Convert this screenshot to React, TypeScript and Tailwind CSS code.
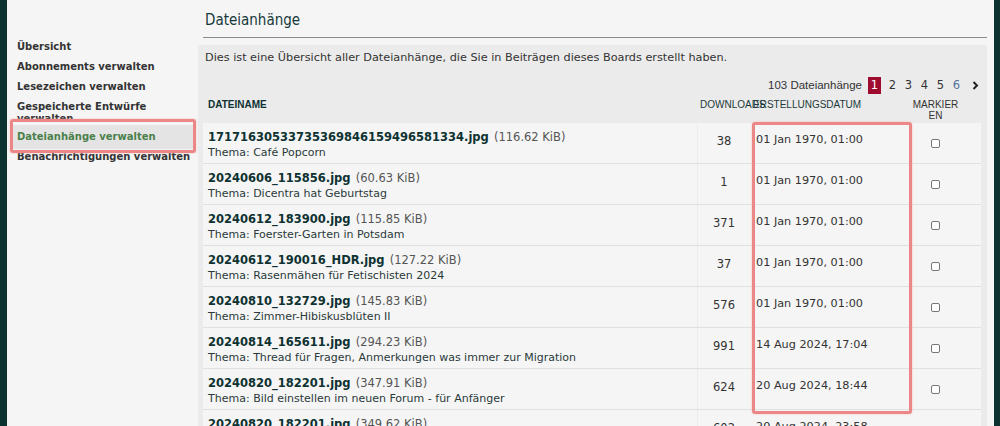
import React from 'react'

const sidebarItems = [
  'Übersicht',
  'Abonnements verwalten',
  'Lesezeichen verwalten',
  'Gespeicherte Entwürfe verwalten',
]

const rows = [
  { file: '17171630533735369846159496581334.jpg', size: '116.62 KiB', topic: 'Café Popcorn', dl: '38', date: '01 Jan 1970, 01:00' },
  { file: '20240606_115856.jpg', size: '60.63 KiB', topic: 'Dicentra hat Geburtstag', dl: '1', date: '01 Jan 1970, 01:00' },
  { file: '20240612_183900.jpg', size: '115.85 KiB', topic: 'Foerster-Garten in Potsdam', dl: '371', date: '01 Jan 1970, 01:00' },
  { file: '20240612_190016_HDR.jpg', size: '127.22 KiB', topic: 'Rasenmähen für Fetischisten 2024', dl: '37', date: '01 Jan 1970, 01:00' },
  { file: '20240810_132729.jpg', size: '145.83 KiB', topic: 'Zimmer-Hibiskusblüten II', dl: '576', date: '01 Jan 1970, 01:00' },
  { file: '20240814_165611.jpg', size: '294.23 KiB', topic: 'Thread für Fragen, Anmerkungen was immer zur Migration', dl: '991', date: '14 Aug 2024, 17:04' },
  { file: '20240820_182201.jpg', size: '347.91 KiB', topic: 'Bild einstellen im neuen Forum - für Anfänger', dl: '624', date: '20 Aug 2024, 18:44' },
  { file: '20240820_182201.jpg', size: '349.62 KiB', topic: 'Bild einstellen im neuen Forum - für Anfänger', dl: '602', date: '20 Aug 2024, 23:58' },
]

const dejavu = "font-['DejaVu_Sans',Verdana,sans-serif]"
const arial = "font-['Liberation_Sans',Arial,sans-serif]"

export default function App() {
  return (
    <div className={`flex h-[426px] w-[1000px] overflow-hidden bg-[#f5f5f5] ${dejavu}`}>
      <div className="w-[7px] shrink-0 bg-[#0c3230]" />

      {/* sidebar */}
      <div className="w-[191px] shrink-0 pl-[5px] pr-[3px] pt-[37px] text-[10px] font-bold text-[#333]">
        {sidebarItems.map((label) => (
          <div key={label} className="h-5 py-1 pl-[5px] leading-[12px]">
            {label}
          </div>
        ))}
        <div className="relative z-10 mt-[8px] h-6 bg-[#e4e4e4] pl-[5px] leading-6 text-[#4b7f4b]">
          Dateianhänge verwalten
          <div className="pointer-events-none absolute -top-[6px] -bottom-[4px] -left-[2px] -right-[1px] rounded-[3px] border-[3px] border-[#ec8787] shadow-[0_0_2px_#f3b5b5]" />
        </div>
        <div className="h-5 pt-[2px] pl-[5px] leading-[12px]">Benachrichtigungen verwalten</div>
      </div>

      {/* main */}
      <div className="flex min-w-0 flex-1 flex-col">
        <div className="ml-[5px] border-b border-[#8a8a8a] pt-[10px] pb-[7px] pl-[2px]">
          <h1 className="font-['DejaVu_Sans_Condensed','DejaVu_Sans',sans-serif] text-[15px] leading-5 text-[#17393a]">
            Dateianhänge
          </h1>
        </div>

        <div className="mt-[7px] flex-1 bg-[#ebebeb]">
          <p className="pt-[6px] pl-[7px] text-[11.25px] leading-[14px] text-[#333]">
            Dies ist eine Übersicht aller Dateianhänge, die Sie in Beiträgen dieses Boards erstellt haben.
          </p>

          <div className="mt-3 flex h-[17px] items-center justify-end pr-[8px]">
            <span className={`${arial} mr-[6px] text-[11.5px] text-[#333]`}>103 Dateianhänge</span>
            <span className="flex h-[17px] w-[13px] items-center justify-center bg-[#9e0b2f] text-[11.5px] text-white">1</span>
            <span className="ml-[6px] w-[11px] text-center text-[11.5px] text-[#333]">2</span>
            <span className="ml-[5px] w-[11px] text-center text-[11.5px] text-[#333]">3</span>
            <span className="ml-[5px] w-[11px] text-center text-[11.5px] text-[#333]">4</span>
            <span className="ml-[5px] w-[11px] text-center text-[11.5px] text-[#333]">5</span>
            <span className="ml-[5px] w-[11px] text-center text-[11.5px] text-[#5273a0]">6</span>
            <svg className="ml-[10px]" width="7" height="9" viewBox="0 0 7 9">
              <path d="M1.5 1 L5 4.5 L1.5 8" fill="none" stroke="#222" strokeWidth="2" />
            </svg>
          </div>

          <div className="relative mx-[5px] mr-[6px] mt-px">
            {/* header */}
            <div className={`${arial} flex h-[28px] pt-[4px] text-[10px] leading-[11px] text-[#1d3a3a]`}>
              <div className="w-[494px] pl-[5px] font-bold text-[#0e3231]">DATEINAME</div>
              <div className="w-[53px] whitespace-nowrap pl-[3px]">DOWNLOADS</div>
              <div className="relative w-[140px] whitespace-nowrap pl-[3px]">ERSTELLUNGSDATUM</div>
              <div className="flex-1 text-center text-[#333]">
                MARKIER
                <br />
                EN
              </div>
            </div>

            {/* rows */}
            {rows.map((r, i) => (
              <div key={i} className="flex h-[41px] border-b border-[#e0e0e0] bg-[#f5f5f5]">
                <div className="w-[494px] pl-[5px] pt-[6px]">
                  <div className="leading-[14px] whitespace-nowrap">
                    <span className="text-[11.5px] font-bold text-[#0e3231]">{r.file}</span>{' '}
                    <span className="text-[11.5px] text-[#555]">({r.size})</span>
                  </div>
                  <div className="mt-[2px] text-[11px] leading-[14px] text-[#2a3a3a]">Thema: {r.topic}</div>
                </div>
                <div className="flex w-[53px] items-center justify-center border-l border-[#ececec] pb-[3px] text-[11.5px] text-[#333]">
                  {r.dl}
                </div>
                <div className="flex w-[140px] items-center pl-[6px] pb-[5px] text-[11.25px] text-[#333]">{r.date}</div>
                <div className="flex flex-1 items-center justify-center">
                  <span className="h-[9px] w-[9px] rounded-[2px] border border-[#777] bg-white" />
                </div>
              </div>
            ))}

            {/* highlight around the date column */}
            <div className="pointer-events-none absolute left-[549px] top-[27px] h-[292px] w-[160px] rounded-[3px] border-[3px] border-[#ec8787] shadow-[0_0_2px_#f3b5b5]" />
          </div>
        </div>
      </div>

      <div className="w-[7px] shrink-0" />
      <div className="w-[6px] shrink-0 bg-[#0c3230]" />
    </div>
  )
}
